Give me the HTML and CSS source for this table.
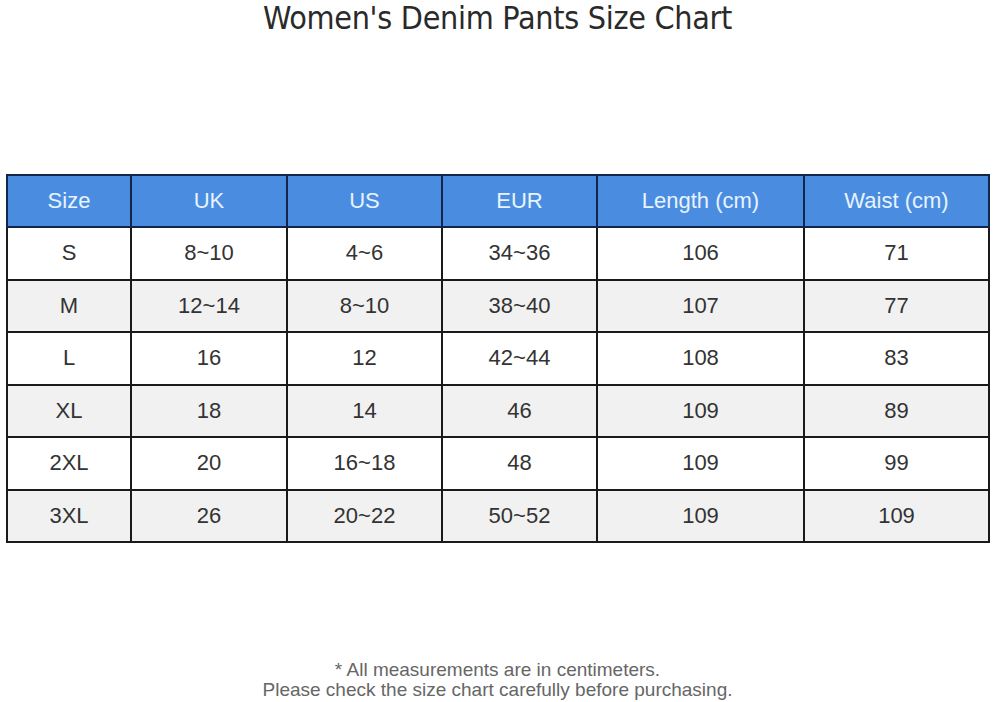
FILE: index.html
```html
<!DOCTYPE html>
<html>
<head>
<meta charset="utf-8">
<link rel="stylesheet" href="styles.css">
</head>
<body>
<div class="page">
  <h1 class="title">Women's Denim Pants Size Chart</h1>
  <table class="chart">
    <colgroup>
      <col class="c1"><col class="c2"><col class="c3"><col class="c4"><col class="c5"><col class="c6">
    </colgroup>
    <thead>
      <tr><th>Size</th><th>UK</th><th>US</th><th>EUR</th><th>Length (cm)</th><th>Waist (cm)</th></tr>
    </thead>
    <tbody>
      <tr><td>S</td><td>8~10</td><td>4~6</td><td>34~36</td><td>106</td><td>71</td></tr>
      <tr class="alt"><td>M</td><td>12~14</td><td>8~10</td><td>38~40</td><td>107</td><td>77</td></tr>
      <tr><td>L</td><td>16</td><td>12</td><td>42~44</td><td>108</td><td>83</td></tr>
      <tr class="alt"><td>XL</td><td>18</td><td>14</td><td>46</td><td>109</td><td>89</td></tr>
      <tr><td>2XL</td><td>20</td><td>16~18</td><td>48</td><td>109</td><td>99</td></tr>
      <tr class="alt"><td>3XL</td><td>26</td><td>20~22</td><td>50~52</td><td>109</td><td>109</td></tr>
    </tbody>
  </table>
  <div class="note">
    <p>* All measurements are in centimeters.</p>
    <p>Please check the size chart carefully before purchasing.</p>
  </div>
</div>
</body>
</html>
```

FILE: styles.css
```css
html, body {
  margin: 0;
  padding: 0;
  background: #ffffff;
}
.page {
  width: 995px;
  height: 702px;
  display: flex;
  flex-direction: column;
  align-items: center;
  font-family: "Liberation Sans", Arial, sans-serif;
}
.title {
  margin: 0;
  height: 36px;
  line-height: 36px;
  font-family: "DejaVu Sans Condensed", "DejaVu Sans", sans-serif;
  font-weight: normal;
  font-size: 32px;
  color: #2a2a2a;
  letter-spacing: -0.3px;
}
.chart {
  align-self: flex-start;
  margin-top: 138px;
  margin-left: 6px;
  width: 982px;
  border-collapse: collapse;
  table-layout: fixed;
  font-size: 22px;
  color: #333;
}
.c1 { width: 124px; }
.c2 { width: 156px; }
.c3 { width: 155px; }
.c4 { width: 155px; }
.c5 { width: 207px; }
.c6 { width: 185px; }
.chart th, .chart td {
  border: 2px solid #1a1a1a;
  text-align: center;
  padding: 0;
  font-weight: normal;
}
.chart th {
  background: #4a8de0;
  color: #e8f3ff;
  height: 50px;
  border-color: #14254a;
}
.chart td {
  height: 50.5px;
  background: #ffffff;
}
.chart tr.alt td {
  background: #f1f1f1;
}
.note {
  margin-top: auto;
  margin-bottom: 2px;
  text-align: center;
  font-size: 19px;
  color: #666;
  line-height: 20px;
}
.note p {
  margin: 0;
}
```
